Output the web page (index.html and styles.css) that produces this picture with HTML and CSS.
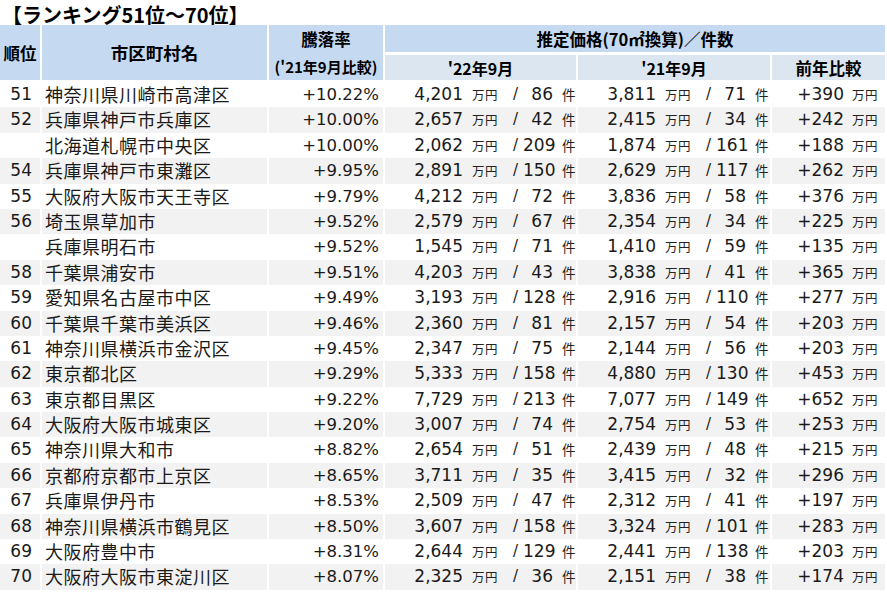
FILE: index.html
```html
<!DOCTYPE html>
<html lang="ja">
<head>
<meta charset="utf-8">
<link rel="stylesheet" href="styles.css">
</head>
<body>
<div class="title">【ランキング51位～70位】</div>
<div class="head">
  <div class="h hrank">順位</div>
  <div class="h hname">市区町村名</div>
  <div class="h hrate"><span>騰落率</span><span class="hsub">('21年9月比較)</span></div>
  <div class="h hprice">推定価格(70㎡換算)／件数</div>
  <div class="sh s22">'22年9月</div>
  <div class="sh s21">'21年9月</div>
  <div class="sh sdiff">前年比較</div>
</div>
<div class="body">
  <div class="row"><div class="rank">51</div><div class="name">神奈川県川崎市高津区</div><div class="rate">+10.22%</div><div class="price"><span class="num">4,201</span><span class="u">万円</span><span class="sl">/</span><span class="c">86</span><span class="k">件</span></div><div class="price"><span class="num">3,811</span><span class="u">万円</span><span class="sl">/</span><span class="c">71</span><span class="k">件</span></div><div class="diff"><span class="dv">+390</span><span class="u">万円</span></div></div>
  <div class="row alt"><div class="rank">52</div><div class="name">兵庫県神戸市兵庫区</div><div class="rate">+10.00%</div><div class="price"><span class="num">2,657</span><span class="u">万円</span><span class="sl">/</span><span class="c">42</span><span class="k">件</span></div><div class="price"><span class="num">2,415</span><span class="u">万円</span><span class="sl">/</span><span class="c">34</span><span class="k">件</span></div><div class="diff"><span class="dv">+242</span><span class="u">万円</span></div></div>
  <div class="row"><div class="rank"></div><div class="name">北海道札幌市中央区</div><div class="rate">+10.00%</div><div class="price"><span class="num">2,062</span><span class="u">万円</span><span class="sl">/</span><span class="c">209</span><span class="k">件</span></div><div class="price"><span class="num">1,874</span><span class="u">万円</span><span class="sl">/</span><span class="c">161</span><span class="k">件</span></div><div class="diff"><span class="dv">+188</span><span class="u">万円</span></div></div>
  <div class="row alt"><div class="rank">54</div><div class="name">兵庫県神戸市東灘区</div><div class="rate">+9.95%</div><div class="price"><span class="num">2,891</span><span class="u">万円</span><span class="sl">/</span><span class="c">150</span><span class="k">件</span></div><div class="price"><span class="num">2,629</span><span class="u">万円</span><span class="sl">/</span><span class="c">117</span><span class="k">件</span></div><div class="diff"><span class="dv">+262</span><span class="u">万円</span></div></div>
  <div class="row"><div class="rank">55</div><div class="name">大阪府大阪市天王寺区</div><div class="rate">+9.79%</div><div class="price"><span class="num">4,212</span><span class="u">万円</span><span class="sl">/</span><span class="c">72</span><span class="k">件</span></div><div class="price"><span class="num">3,836</span><span class="u">万円</span><span class="sl">/</span><span class="c">58</span><span class="k">件</span></div><div class="diff"><span class="dv">+376</span><span class="u">万円</span></div></div>
  <div class="row alt"><div class="rank">56</div><div class="name">埼玉県草加市</div><div class="rate">+9.52%</div><div class="price"><span class="num">2,579</span><span class="u">万円</span><span class="sl">/</span><span class="c">67</span><span class="k">件</span></div><div class="price"><span class="num">2,354</span><span class="u">万円</span><span class="sl">/</span><span class="c">34</span><span class="k">件</span></div><div class="diff"><span class="dv">+225</span><span class="u">万円</span></div></div>
  <div class="row"><div class="rank"></div><div class="name">兵庫県明石市</div><div class="rate">+9.52%</div><div class="price"><span class="num">1,545</span><span class="u">万円</span><span class="sl">/</span><span class="c">71</span><span class="k">件</span></div><div class="price"><span class="num">1,410</span><span class="u">万円</span><span class="sl">/</span><span class="c">59</span><span class="k">件</span></div><div class="diff"><span class="dv">+135</span><span class="u">万円</span></div></div>
  <div class="row alt"><div class="rank">58</div><div class="name">千葉県浦安市</div><div class="rate">+9.51%</div><div class="price"><span class="num">4,203</span><span class="u">万円</span><span class="sl">/</span><span class="c">43</span><span class="k">件</span></div><div class="price"><span class="num">3,838</span><span class="u">万円</span><span class="sl">/</span><span class="c">41</span><span class="k">件</span></div><div class="diff"><span class="dv">+365</span><span class="u">万円</span></div></div>
  <div class="row"><div class="rank">59</div><div class="name">愛知県名古屋市中区</div><div class="rate">+9.49%</div><div class="price"><span class="num">3,193</span><span class="u">万円</span><span class="sl">/</span><span class="c">128</span><span class="k">件</span></div><div class="price"><span class="num">2,916</span><span class="u">万円</span><span class="sl">/</span><span class="c">110</span><span class="k">件</span></div><div class="diff"><span class="dv">+277</span><span class="u">万円</span></div></div>
  <div class="row alt"><div class="rank">60</div><div class="name">千葉県千葉市美浜区</div><div class="rate">+9.46%</div><div class="price"><span class="num">2,360</span><span class="u">万円</span><span class="sl">/</span><span class="c">81</span><span class="k">件</span></div><div class="price"><span class="num">2,157</span><span class="u">万円</span><span class="sl">/</span><span class="c">54</span><span class="k">件</span></div><div class="diff"><span class="dv">+203</span><span class="u">万円</span></div></div>
  <div class="row"><div class="rank">61</div><div class="name">神奈川県横浜市金沢区</div><div class="rate">+9.45%</div><div class="price"><span class="num">2,347</span><span class="u">万円</span><span class="sl">/</span><span class="c">75</span><span class="k">件</span></div><div class="price"><span class="num">2,144</span><span class="u">万円</span><span class="sl">/</span><span class="c">56</span><span class="k">件</span></div><div class="diff"><span class="dv">+203</span><span class="u">万円</span></div></div>
  <div class="row alt"><div class="rank">62</div><div class="name">東京都北区</div><div class="rate">+9.29%</div><div class="price"><span class="num">5,333</span><span class="u">万円</span><span class="sl">/</span><span class="c">158</span><span class="k">件</span></div><div class="price"><span class="num">4,880</span><span class="u">万円</span><span class="sl">/</span><span class="c">130</span><span class="k">件</span></div><div class="diff"><span class="dv">+453</span><span class="u">万円</span></div></div>
  <div class="row"><div class="rank">63</div><div class="name">東京都目黒区</div><div class="rate">+9.22%</div><div class="price"><span class="num">7,729</span><span class="u">万円</span><span class="sl">/</span><span class="c">213</span><span class="k">件</span></div><div class="price"><span class="num">7,077</span><span class="u">万円</span><span class="sl">/</span><span class="c">149</span><span class="k">件</span></div><div class="diff"><span class="dv">+652</span><span class="u">万円</span></div></div>
  <div class="row alt"><div class="rank">64</div><div class="name">大阪府大阪市城東区</div><div class="rate">+9.20%</div><div class="price"><span class="num">3,007</span><span class="u">万円</span><span class="sl">/</span><span class="c">74</span><span class="k">件</span></div><div class="price"><span class="num">2,754</span><span class="u">万円</span><span class="sl">/</span><span class="c">53</span><span class="k">件</span></div><div class="diff"><span class="dv">+253</span><span class="u">万円</span></div></div>
  <div class="row"><div class="rank">65</div><div class="name">神奈川県大和市</div><div class="rate">+8.82%</div><div class="price"><span class="num">2,654</span><span class="u">万円</span><span class="sl">/</span><span class="c">51</span><span class="k">件</span></div><div class="price"><span class="num">2,439</span><span class="u">万円</span><span class="sl">/</span><span class="c">48</span><span class="k">件</span></div><div class="diff"><span class="dv">+215</span><span class="u">万円</span></div></div>
  <div class="row alt"><div class="rank">66</div><div class="name">京都府京都市上京区</div><div class="rate">+8.65%</div><div class="price"><span class="num">3,711</span><span class="u">万円</span><span class="sl">/</span><span class="c">35</span><span class="k">件</span></div><div class="price"><span class="num">3,415</span><span class="u">万円</span><span class="sl">/</span><span class="c">32</span><span class="k">件</span></div><div class="diff"><span class="dv">+296</span><span class="u">万円</span></div></div>
  <div class="row"><div class="rank">67</div><div class="name">兵庫県伊丹市</div><div class="rate">+8.53%</div><div class="price"><span class="num">2,509</span><span class="u">万円</span><span class="sl">/</span><span class="c">47</span><span class="k">件</span></div><div class="price"><span class="num">2,312</span><span class="u">万円</span><span class="sl">/</span><span class="c">41</span><span class="k">件</span></div><div class="diff"><span class="dv">+197</span><span class="u">万円</span></div></div>
  <div class="row alt"><div class="rank">68</div><div class="name">神奈川県横浜市鶴見区</div><div class="rate">+8.50%</div><div class="price"><span class="num">3,607</span><span class="u">万円</span><span class="sl">/</span><span class="c">158</span><span class="k">件</span></div><div class="price"><span class="num">3,324</span><span class="u">万円</span><span class="sl">/</span><span class="c">101</span><span class="k">件</span></div><div class="diff"><span class="dv">+283</span><span class="u">万円</span></div></div>
  <div class="row"><div class="rank">69</div><div class="name">大阪府豊中市</div><div class="rate">+8.31%</div><div class="price"><span class="num">2,644</span><span class="u">万円</span><span class="sl">/</span><span class="c">129</span><span class="k">件</span></div><div class="price"><span class="num">2,441</span><span class="u">万円</span><span class="sl">/</span><span class="c">138</span><span class="k">件</span></div><div class="diff"><span class="dv">+203</span><span class="u">万円</span></div></div>
  <div class="row alt"><div class="rank">70</div><div class="name">大阪府大阪市東淀川区</div><div class="rate">+8.07%</div><div class="price"><span class="num">2,325</span><span class="u">万円</span><span class="sl">/</span><span class="c">36</span><span class="k">件</span></div><div class="price"><span class="num">2,151</span><span class="u">万円</span><span class="sl">/</span><span class="c">38</span><span class="k">件</span></div><div class="diff"><span class="dv">+174</span><span class="u">万円</span></div></div>
</div>
</body>
</html>
```

FILE: styles.css
```css
html, body {
  margin: 0;
  padding: 0;
  background: #ffffff;
}
body {
  width: 887px;
  height: 593px;
  overflow: hidden;
  font-family: "DejaVu Sans", "Noto Sans CJK JP", sans-serif;
  color: #1a1a1a;
}
.title {
  height: 21px;
  padding-top: 4px;
  line-height: 21px;
  font-family: "Noto Sans CJK JP", sans-serif;
  font-size: 20px;
  font-weight: bold;
  color: #000;
  padding-left: 2px;
  white-space: nowrap;
}
.head {
  display: grid;
  grid-template-columns: 40px 225px 114px 191px 192px 113px;
  grid-template-rows: 27px 25px;
  column-gap: 2px;
  row-gap: 3px;
  font-family: "Noto Sans CJK JP", sans-serif;
  font-weight: bold;
  color: #000;
}
.h {
  background: #c5d9f1;
  display: flex;
  align-items: center;
  justify-content: center;
  font-size: 16.5px;
}
.hname {
  font-size: 17.5px;
}
.hrank, .hname, .hrate {
  grid-row: 1 / 3;
}
.hrate {
  flex-direction: column;
  justify-content: space-between;
  padding: 3px 0 2px;
  box-sizing: border-box;
  line-height: 22px;
}
.hsub {
  font-size: 15px;
}
.hprice {
  grid-column: 4 / 7;
  font-size: 16.5px;
}
.sh {
  background: #dce6f1;
  display: flex;
  align-items: center;
  justify-content: center;
  font-size: 16px;
}
.sdiff {
  font-size: 16.5px;
}
.body {
  margin-top: 2px;
}
.row {
  display: grid;
  grid-template-columns: 40px 225px 114px 191px 192px 113px;
  column-gap: 2px;
  height: 25.4px;
  font-size: 17px;
  line-height: 25.4px;
  white-space: nowrap;
}
.row > div {
  display: flex;
  align-items: center;
}
.row.alt > div {
  background: #f2f2f2;
}
.rank {
  justify-content: flex-end;
  padding-right: 8px;
}
.name {
  font-family: "Noto Sans CJK JP", sans-serif;
  font-size: 18px;
  letter-spacing: 0.5px;
  padding-left: 3px;
}
.rate {
  justify-content: flex-end;
  padding-right: 4px;
  font-size: 16.5px;
}
.num {
  width: 78px;
  text-align: right;
  flex: none;
}
.u {
  font-family: "Noto Sans CJK JP", sans-serif;
  font-size: 12.5px;
  letter-spacing: 0.5px;
  color: #222;
}
.price .u {
  width: 33px;
  padding-left: 9px;
  flex: none;
}
.sl {
  width: 10px;
  padding-left: 8px;
  flex: none;
  font-size: 15px;
}
.c {
  width: 30px;
  text-align: right;
  flex: none;
}
.k {
  font-family: "Noto Sans CJK JP", sans-serif;
  font-size: 13.5px;
  padding-left: 9px;
  color: #222;
}
.dv {
  width: 72px;
  text-align: right;
  flex: none;
}
.diff .u {
  padding-left: 8px;
}
```
